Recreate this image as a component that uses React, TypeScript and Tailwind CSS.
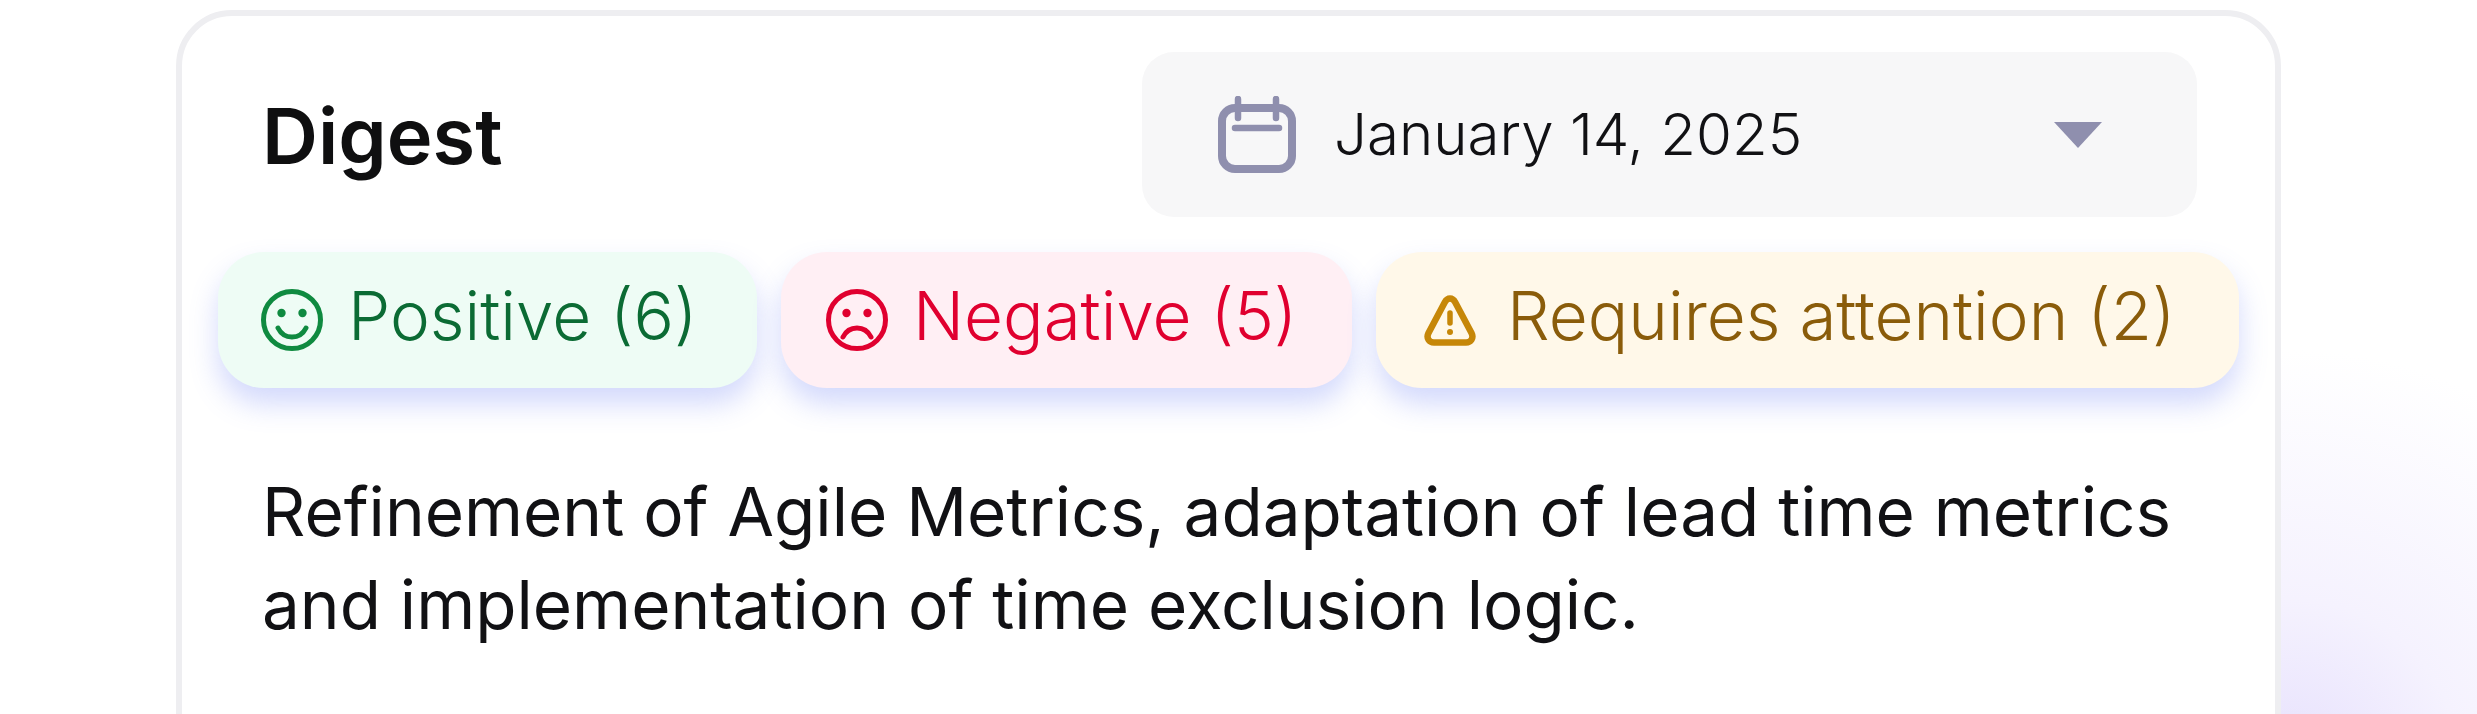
const font = "font-['Inter',_'Liberation_Sans',_sans-serif]";

function Smile({ sad = false }: { sad?: boolean }) {
  return (
    <svg viewBox="0 0 64 64" fill="none" stroke="currentColor" strokeWidth="5" strokeLinecap="round" className="h-[64px] w-[64px] shrink-0">
      <circle cx="32" cy="32" r="28.500" />
      <circle cx="21.500" cy="25" r="4.200" fill="currentColor" stroke="none" />
      <circle cx="42.500" cy="25" r="4.200" fill="currentColor" stroke="none" />
      <path d={sad ? "M18 49c3-6 8-9 14-9s11 3 14 9" : "M18 40c3 6 8 9 14 9s11-3 14-9"} />
    </svg>
  );
}

function Warning() {
  return (
    <svg viewBox="0 0 52 52" fill="none" stroke="currentColor" strokeWidth="6.500" strokeLinejoin="round" strokeLinecap="round" className="h-[52px] w-[52px] shrink-0">
      <path d="M26 4.500c-2.500 0-4 1.500-5.200 3.800L4.500 39c-2.500 5 .5 9.500 5.500 9.500h32c5 0 8-4.500 5.500-9.500L31.200 8.300C30 6 28.500 4.500 26 4.500z" />
      <path d="M26 19v10" strokeWidth="5.500" />
      <circle cx="26" cy="38" r="3" fill="currentColor" stroke="none" />
    </svg>
  );
}

function Calendar() {
  return (
    <svg viewBox="0 0 78 77" fill="none" stroke="#8f8fae" strokeWidth="8" strokeLinecap="round" className="h-[77px] w-[78px] shrink-0">
      <rect x="4" y="12" width="70" height="61" rx="13" />
      <path d="M20 3v19M58 3v19" strokeWidth="6.500" />
      <path d="M17 32h44" strokeWidth="6.500" />
    </svg>
  );
}

const CHIPS = [
  { label: "Positive (6)", chip: "w-[539px] bg-[#eefcf5] text-[#0b6b34] pl-[42px] gap-[24px]", icon: <span className="text-[#0f8a40]"><Smile /></span> },
  { label: "Negative (5)", chip: "w-[571px] bg-[#ffeff4] text-[#e0002f] pl-[44px] gap-[24px]", icon: <Smile sad /> },
  { label: "Requires attention (2)", chip: "w-[863px] bg-[#fff8e9] text-[#8a5c0a] pl-[48px] gap-[31px]", icon: <span className="text-[#c68708]"><Warning /></span> },
];

export default function App() {
  return (
    <div className={`${font} h-[714px] overflow-hidden bg-[radial-gradient(circle_at_2290px_770px,_#e6e0fd_0px,_#f5f2fe_170px,_#ffffff_420px)] pl-[176px] pt-[10px]`}>
      <div className="h-[900px] w-[2105px] rounded-[56px] border-[6px] border-[#eeeef1] bg-white px-[36px] pt-[36px]">
        <div className="flex h-[165px] items-center justify-between pl-[44px] pr-[42px]">
          <h2 className="pt-[4px] text-[77.500px] font-semibold text-[#0f0f10]">Digest</h2>
          <div className="flex h-[165px] w-[1055px] items-center rounded-[32px] bg-[#f7f7f8] pl-[76px]">
            <Calendar />
            <span className="ml-[38px] flex-1 text-[58.200px] font-[350] text-[#111114]">January 14, 2025</span>
            <svg viewBox="0 0 48 26" className="mr-[95px] h-[26px] w-[48px] shrink-0" fill="#8f8fae">
              <path d="M0 0h48L24 26z" />
            </svg>
          </div>
        </div>
        <div className="mt-[35px] flex gap-[24px]">
          {CHIPS.map((c) => (
            <div key={c.label} className={`flex h-[136px] items-center rounded-[46px] text-[67.300px] font-[350] shadow-[0_16px_28px_rgba(110,130,245,0.3)] ${c.chip}`}>
              {c.icon}
              <span className="pb-[7px]">{c.label}</span>
            </div>
          ))}
        </div>
        <p className="mt-[77px] w-[2020px] pl-[44px] text-[67.400px] leading-[93px] text-[#111114]">
          Refinement of Agile Metrics, adaptation of lead time metrics
          <br />
          and implementation of time exclusion logic.
        </p>
      </div>
    </div>
  );
}
